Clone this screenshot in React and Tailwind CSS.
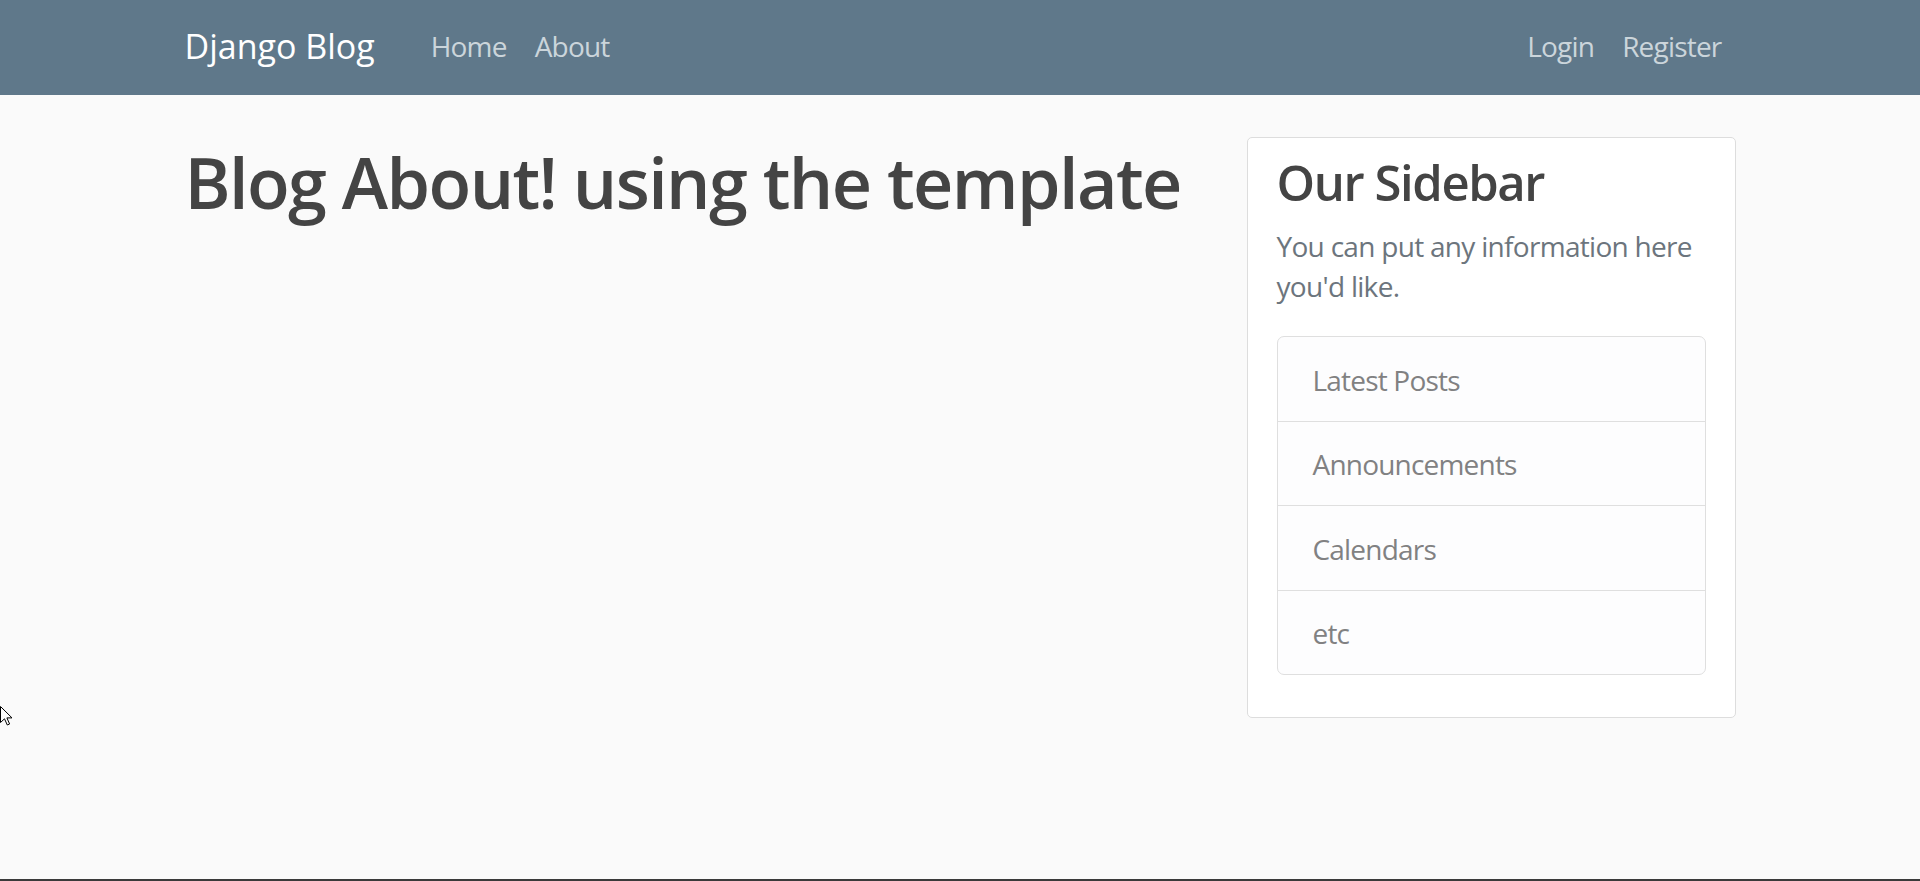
import React from "react";

const leftLinks = ["Home", "About"];
const rightLinks = ["Login", "Register"];
const sidebarLinks = ["Latest Posts", "Announcements", "Calendars", "etc"];

function Navbar() {
  return (
    <header className="h-[95px] bg-[#5f788a]">
      <nav className="mx-auto flex h-full w-[1551px] items-center pb-[3px]">
        <a className="mr-[42px] text-[34px] leading-none text-white">Django Blog</a>
        <div className="flex items-center">
          {leftLinks.map(link => (
            <a key={link} className="px-[14px] text-[28px] leading-none tracking-[-0.8px] text-[#cbd5db]">{link}</a>
          ))}
        </div>
        <div className="ml-auto flex items-center">
          {rightLinks.map(link => (
            <a key={link} className="px-[14px] text-[28px] leading-none tracking-[-0.8px] text-[#cbd5db]">{link}</a>
          ))}
        </div>
      </nav>
    </header>
  );
}

function Sidebar() {
  return (
    <aside className="w-[489px] self-start rounded-[5px] border border-[#dddddd] bg-white px-[29px] pt-[15px] pb-[42px]">
      <h3 className="mb-[14px] text-[49px] leading-[1.2] font-semibold tracking-[-1.4px] text-[#444444]">Our Sidebar</h3>
      <p className="text-[28px] leading-[40px] tracking-[-0.7px] text-[#6c757d]">You can put any information here you'd like.</p>
      <ul className="mt-[30px] divide-y divide-[#dfdfdf] overflow-hidden rounded-[7px] border border-[#dfdfdf] bg-[#fdfdfe]">
        {sidebarLinks.map((item, i) => (
          <li
            key={item}
            className={`${i % 2 === 0 ? "pt-[23px]" : "pt-[22px]"} px-[35px] pb-[21px] text-[28px] leading-[40px] tracking-[-0.8px] text-[#818182]`}
          >
            {item}
          </li>
        ))}
      </ul>
    </aside>
  );
}

function Cursor() {
  return (
    <svg className="absolute left-0 top-[706px]" width="13" height="20" viewBox="0 0 13 20">
      <path d="M0.5 0.5 L0.5 16.5 L4.5 12.8 L7.3 19 L9.6 18 L6.9 11.9 L12 11.9 Z" fill="#ffffff" stroke="#000000" strokeWidth="1" />
    </svg>
  );
}

export default function App() {
  return (
    <div
      className="relative h-screen overflow-hidden border-b-2 border-[#3a3a3a] bg-[#fafafa] text-[#333333]"
      style={{ fontFamily: '"Open Sans", "Noto Sans", sans-serif' }}
    >
      <Navbar />
      <main className="mx-auto flex w-[1551px] pt-[42px]">
        <div className="flex-1 pt-[3px]">
          <h1 className="text-[70px] leading-[1.2] font-semibold tracking-[-1.6px] text-[#444444]">
            Blog About! using the template
          </h1>
        </div>
        <Sidebar />
      </main>
      <Cursor />
    </div>
  );
}
